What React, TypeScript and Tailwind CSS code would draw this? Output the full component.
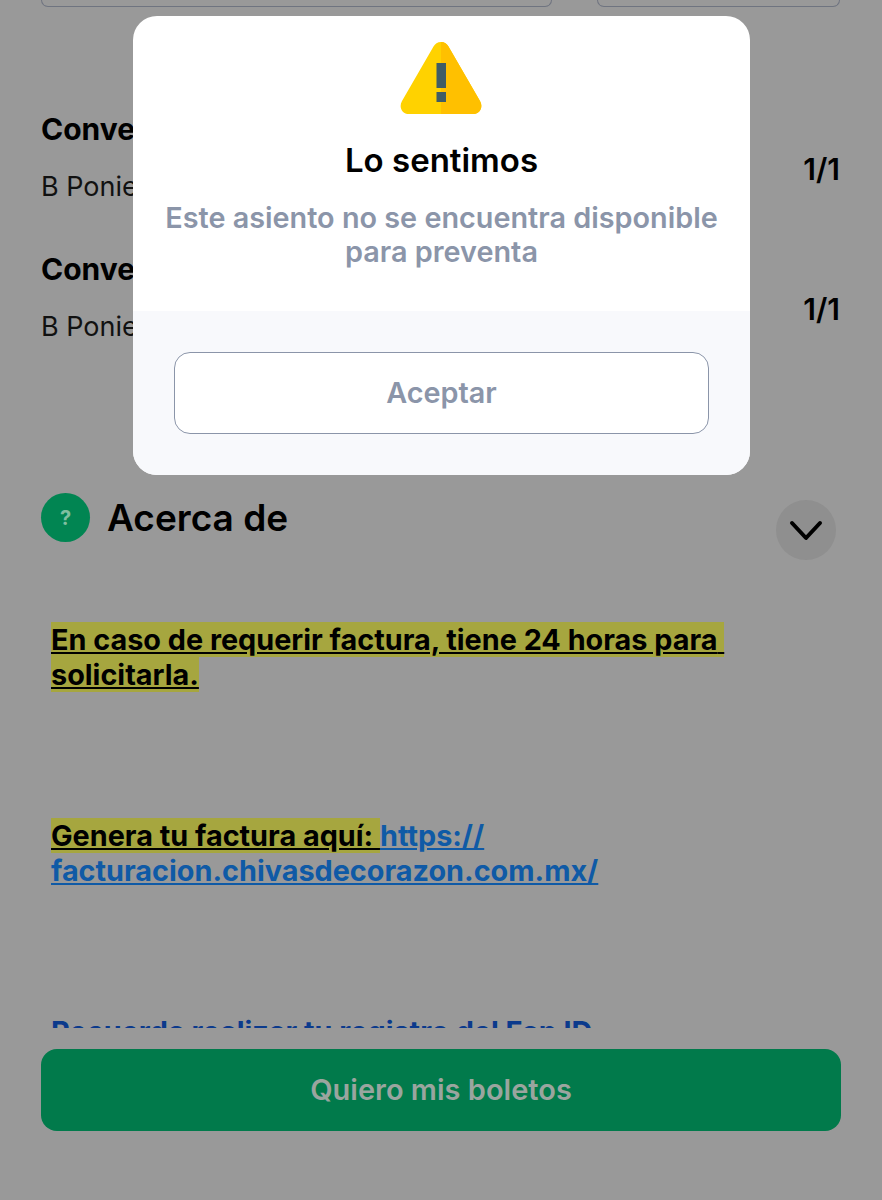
const font = "font-['Inter','Liberation_Sans',sans-serif]";

function Warning() {
  return (
    <svg width="84" height="74" viewBox="0 0 84 74">
      <path d="M41 1C44.500 1 47 3 48.500 5.500L80 60C83.500 66 80 73 73 73H9C2 73-1.500 66 2 60L33.500 5.500C35 3 37.500 1 41 1Z" fill="#ffd200" />
      <path d="M41 1C44.500 1 47 3 48.500 5.500L80 60C83.500 66 80 73 73 73H41Z" fill="#ffc000" />
      <rect x="36.500" y="22" width="9.500" height="25" fill="#3f5c66" />
      <rect x="36.500" y="51" width="9.500" height="10" fill="#3f5c66" />
    </svg>
  );
}

function Ticket({ title, seat }: { title: string; seat: string }) {
  return (
    <div className="flex justify-between">
      <div>
        <p className="text-[30px] leading-[36px] font-bold text-black">{title}</p>
        <p className="mt-[22px] text-[27px] leading-[36px] text-[#111111]">{seat}</p>
      </div>
      <span className="mt-[40px] pr-[1px] text-[30px] leading-[36px] font-semibold text-black">1/1</span>
    </div>
  );
}

export default function App() {
  return (
    <div className={`${font} relative h-[1200px] w-[882px] overflow-hidden bg-[#999999]`}>
      <div className="flex gap-[45px] px-[41px]">
        <div className="h-[7px] w-[511px] rounded-b-[18px] border border-t-0 border-[#6f7480]" />
        <div className="h-[7px] w-[243px] rounded-b-[18px] border border-t-0 border-[#6f7480]" />
      </div>

      <div className="flex flex-col gap-[46px] px-[41px] pt-[104px]">
        <Ticket title="Convención" seat="B Poniente 210" />
        <Ticket title="Convención" seat="B Poniente 210" />
      </div>

      <div className="mt-[148px] flex items-start justify-between pl-[41px] pr-[46px]">
        <div className="flex items-center gap-[17px]">
          <div className="flex h-[49px] w-[49px] items-center justify-center rounded-full bg-[#018552] text-[20px] font-bold text-[#7fbfa0]">?</div>
          <h2 className="text-[37px] leading-[44px] font-semibold text-black">Acerca de</h2>
        </div>
        <div className="mt-[7px] flex h-[60px] w-[60px] items-center justify-center rounded-full bg-[#8f8f8f]">
          <svg width="34" height="34" viewBox="0 0 34 34" fill="none" stroke="#000" strokeWidth="4" strokeLinecap="round" strokeLinejoin="round">
            <path d="M3 10l14 15L31 10" />
          </svg>
        </div>
      </div>

      <div className="h-[468px] overflow-hidden pl-[51px] pt-[62px] text-[28.8px] leading-[35px] font-bold text-black">
        <p className="w-[680px]">
          <span className="bg-[#a6a63f] underline">
            En caso de requerir factura, tiene 24 horas para{"\u00a0"}
            <br />
            solicitarla.
          </span>
        </p>
        <p className="mt-[126px] w-[680px]">
          <span className="bg-[#a6a63f] underline">Genera tu factura aquí: </span>
          <a className="text-[#0f5aa6] underline">
            https://
            <wbr />
            facturacion.chivasdecorazon.com.mx/
          </a>
        </p>
        <p className="mt-[126px] w-[680px] text-[#0b3a8c]">Recuerda realizar tu registro del Fan ID</p>
      </div>

      <div className="mt-[21px] px-[41px]">
        <button className="h-[82px] w-full rounded-[16px] bg-[#017a4b] text-[29px] font-semibold text-[#9aa59f]">Quiero mis boletos</button>
      </div>

      <div className="absolute left-[133px] top-[16px] w-[617px] overflow-hidden rounded-[24px] bg-white">
        <div className="flex h-[295px] flex-col items-center px-[20px] pt-[25px] text-center">
          <Warning />
          <h3 className="mt-[23px] text-[33px] leading-[44px] font-semibold text-black">Lo sentimos</h3>
          <p className="mt-[19px] text-[28.8px] leading-[34px] font-semibold text-[#8b95a9]">Este asiento no se encuentra disponible para preventa</p>
        </div>
        <div className="bg-[#f8f9fc] px-[41px] py-[41px]">
          <button className="h-[82px] w-full rounded-[16px] border border-[#8b95a9] bg-white text-[28.8px] font-semibold text-[#8b95a9]">Aceptar</button>
        </div>
      </div>
    </div>
  );
}
